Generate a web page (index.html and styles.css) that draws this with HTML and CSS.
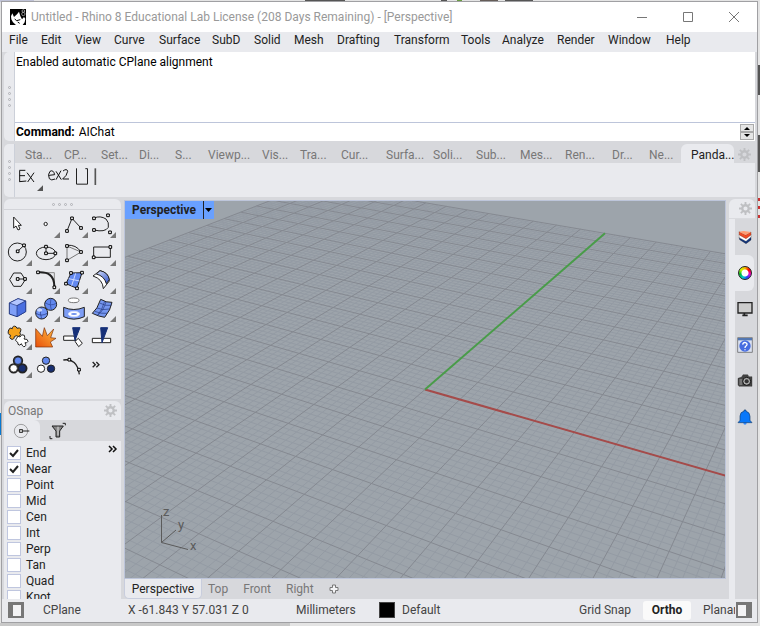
FILE: index.html
```html
<!DOCTYPE html>
<html lang="en">
<head>
<meta charset="utf-8">
<title>Untitled - Rhino 8</title>
<link rel="stylesheet" href="styles.css">
</head>
<body>
<div class="window">
  <header class="titlebar">
    <svg class="logo" viewBox="0 0 48 48"><rect width="48" height="48" fill="#000"/><path d="M3 22L7 13L12 24L21 16L27 8L31 21L36 31L42 24L46 29L44 40L38 48H18L9 40L4 31Z" fill="#fff"/><path d="M14 30L20 35L31 32M23 39L29 43" stroke="#000" stroke-width="3" fill="none"/><circle cx="40" cy="6" r="4" fill="none" stroke="#ccc" stroke-width="2"/><circle cx="40" cy="15" r="5" fill="none" stroke="#ccc" stroke-width="2"/></svg>
    <h1>Untitled - Rhino 8 Educational Lab License (208 Days Remaining) - [Perspective]</h1>
    <div class="winbtns">
      <button aria-label="Minimize"><svg viewBox="0 0 12 12"><path d="M1 6.500H11"/></svg></button>
      <button aria-label="Maximize"><svg viewBox="0 0 12 12"><path d="M1.500 1.500H10.500V10.500H1.500Z"/></svg></button>
      <button aria-label="Close"><svg viewBox="0 0 12 12"><path d="M1 1L11 11M11 1L1 11"/></svg></button>
    </div>
  </header>
  <nav class="menu">
    <button>File</button><button>Edit</button><button>View</button><button>Curve</button><button>Surface</button><button>SubD</button><button>Solid</button><button>Mesh</button><button>Drafting</button><button>Transform</button><button>Tools</button><button>Analyze</button><button>Render</button><button>Window</button><button>Help</button>
  </nav>
  <div class="body">
    <section class="command">
      <div class="grip"><i></i><i></i><i></i><i></i></div>
      <div class="console">
        <div class="history">Enabled automatic CPlane alignment</div>
        <div class="prompt">
          <label for="cmd">Command:</label><input id="cmd" type="text" value="AIChat">
          <div class="spin"><button aria-label="Previous"><svg viewBox="0 0 12 6"><path d="M3 5L6 2L9 5Z"/></svg></button><button aria-label="Next"><svg viewBox="0 0 12 6"><path d="M3 1L6 4L9 1Z"/></svg></button></div>
        </div>
      </div>
    </section>
    <section class="toolbar">
      <div class="grip"><i></i><i></i><i></i><i></i></div>
      <div class="toolbar-main">
        <div class="tabs">
          <button>Sta...</button><button>CP...</button><button>Set...</button><button>Di...</button><button>S...</button><button>Viewp...</button><button>Vis...</button><button>Tra...</button><button>Cur...</button><button>Surfa...</button><button>Soli...</button><button>Sub...</button><button>Mes...</button><button>Ren...</button><button>Dr...</button><button>Ne...</button><button class="on">Panda...</button>
          <button class="gear" aria-label="Options"><svg viewBox="0 0 14 14"><use href="#gear"/></svg></button>
        </div>
        <div class="custom">
          <button aria-label="Ex"><svg viewBox="48 489 84 90"><path d="M59 512V545M58 511H76M59 527H75M58 545L79 543M81 518L102 546M102 518L83 546" stroke="#111"/><path d="M129 556V573H111Z" fill="#555" stroke="none"/></svg></button>
          <button aria-label="Ex2"><svg viewBox="132 489 84 90"><path d="M147 526L164 524Q160 508 150 514Q142 523 148 536Q154 543 165 537M168 514L184 539M183 512L168 539M189 513Q201 504 203 514Q201 527 188 537H207" stroke="#111"/></svg></button>
          <button class="narrow" aria-label="Box"><svg viewBox="216 489 54 90"><path d="M229.500 505V552.500H262.500V506H256" stroke="#222"/></svg></button>
          <button class="narrow" aria-label="Line"><svg viewBox="270 489 54 90"><path d="M286 505V555" stroke="#555" stroke-width="5"/></svg></button>
        </div>
      </div>
    </section>
    <main class="work">
      <aside class="left">
        <section class="palette">
          <div class="hgrip"><i></i><i></i><i></i><i></i></div>
          <div class="tools" id="tools">
            <button aria-label="Select"><svg viewBox="12 45 84 84"><path d="M41 66V99L48 93L54 105L60 102L55 91H64Z" class="w"/></svg></button>
            <button aria-label="Point" class="more"><svg viewBox="96 45 84 84"><circle cx="137" cy="87" r="5" class="w"/></svg></button>
            <button aria-label="Polyline" class="more"><svg viewBox="180 45 84 84"><path d="M201 108L216 70L243 99"/><path class="n" d="M197 104h8v8h-8zM212 66h8v8h-8zM239 95h8v8h-8z"/></svg></button>
            <button aria-label="Curve" class="more"><svg viewBox="264 45 84 84"><path d="M282 69Q301 61 318 72Q328 82 325 97Q315 113 282 105"/><path class="n" d="M278 66h8v8h-8zM320 57h8v8h-8zM278 101h8v8h-8zM326 108h8v8h-8z"/></svg></button>
            <button aria-label="Circle" class="more"><svg viewBox="12 129 84 84"><circle cx="52" cy="171" r="27"/><path d="M53 169L72 151"/><path class="n" d="M49 165h8v8h-8zM68 147h8v8h-8z"/></svg></button>
            <button aria-label="Ellipse" class="more"><svg viewBox="96 129 84 84"><ellipse cx="138" cy="175" rx="29" ry="19"/><path d="M138 155V175H166"/><path class="n" d="M134 151h8v8h-8zM134 171h8v8h-8zM162 171h8v8h-8z"/></svg></button>
            <button aria-label="Arc" class="more"><svg viewBox="180 129 84 84"><path d="M201 196V153L243 171Z" stroke="#777"/><path d="M201 151Q228 148 243 171"/><path class="n" d="M197 149h8v8h-8zM197 192h8v8h-8zM239 167h8v8h-8z"/></svg></button>
            <button aria-label="Rectangle" class="more"><svg viewBox="264 129 84 84"><path d="M281 156H331V187H281Z"/><path class="n" d="M327 152h8v8h-8zM277 183h8v8h-8z"/></svg></button>
            <button aria-label="Polygon" class="more"><svg viewBox="12 213 84 84"><path d="M29 254L41 234H63L76 254L63 274H41Z"/><path d="M52 252H75"/><path class="n" d="M49 248h8v8h-8zM71 248h8v8h-8z"/></svg></button>
            <button aria-label="Fillet" class="more"><svg viewBox="96 213 84 84"><path d="M114 233H163V277" stroke="#888"/><path d="M117 232C143 231 162 240 163 273" stroke-width="6"/><path class="n" d="M110 228h8v8h-8zM159 273h8v8h-8z"/></svg></button>
            <button aria-label="Surface from points" class="more"><svg viewBox="180 213 84 84"><path d="M213 234L246 233L231 280L198 266Z" fill="#6389ef"/><path d="M227 235L215 272M206 251L239 258" stroke="#cdd9ff"/><path class="n" d="M209 230h8v8h-8zM242 229h8v8h-8zM194 262h8v8h-8zM227 276h8v8h-8z"/></svg></button>
            <button aria-label="Extrude" class="more"><svg viewBox="264 213 84 84"><defs><linearGradient id="sheet" x1="0" y1="0" x2="1" y2="1"><stop offset="0" stop-color="#dbe4ff"/><stop offset="1" stop-color="#2c4fc4"/></linearGradient></defs><path d="M279 243L300 227Q325 232 328 258L310 281Q308 252 279 243Z" fill="#fff"/><path d="M289 237L300 227Q325 232 328 254L319 266Q313 243 289 237Z" fill="url(#sheet)"/></svg></button>
            <button aria-label="Box" class="more"><svg viewBox="12 12 84 84"><path d="M28 39L54 26L77 33V65L51 80L28 72Z" fill="#7f9ff7" stroke="#22377f"/><path d="M28 39L54 26L77 33L51 47Z" fill="#b3c6ff" stroke="#22377f" stroke-width="2"/><path d="M51 47L77 33V65L51 80Z" fill="#4a6fe0" stroke="#22377f" stroke-width="2"/></svg></button>
            <button aria-label="Sphere" class="more"><svg viewBox="96 12 84 84"><circle cx="152" cy="43" r="18" fill="#6288ee"/><path d="M136 38Q151 50 169 40M153 25Q148 44 154 60" stroke="#2a4292" stroke-width="2"/><circle cx="125" cy="69" r="18" fill="#7195f5"/><path d="M108 70Q125 81 143 69M124 51Q118 70 125 87" stroke="#22377f" stroke-width="2"/><ellipse cx="119" cy="60" rx="8" ry="5" fill="#c7d6ff" stroke="none"/></svg></button>
            <button aria-label="Cylinder" class="more"><svg viewBox="180 12 84 84"><ellipse cx="221" cy="31" rx="16" ry="7" fill="#fff" stroke="#777"/><path d="M191 52Q221 65 253 52V80Q221 95 191 80Z" fill="#7d9df5"/><ellipse cx="222" cy="72" rx="17" ry="8" fill="#fff" stroke="#d3ddff"/><ellipse cx="222" cy="72" rx="9" ry="3" fill="#6e90ed" stroke="none"/></svg></button>
            <button aria-label="Surface tools" class="more"><svg viewBox="264 12 84 84"><path d="M277 70Q292 58 302 28Q318 38 336 37Q332 60 314 82Q297 80 277 70Z" fill="#7596ef"/><path d="M291 54Q307 62 328 57M293 76Q312 60 318 35M292 76Q306 62 314 34M299 39Q316 49 334 46M284 64Q303 72 321 70" stroke="#24387d" stroke-width="2"/></svg></button>
            <button aria-label="Explode" class="more"><svg viewBox="12 96 84 84"><path d="M26 120Q30 110 37 116Q38 105 48 110Q51 118 54 114Q65 113 62 123Q57 129 62 134Q56 144 49 137L43 140Q42 151 33 147Q26 143 32 136Q21 133 26 120Z" fill="#f5a21b"/><path d="M50 145Q53 134 60 141Q64 130 73 136Q76 143 72 147Q84 146 84 154Q80 161 75 158Q81 170 71 170Q65 166 64 161Q60 169 54 163Q55 156 50 155Q43 151 50 145Z" class="w"/></svg></button>
            <button aria-label="Join"><svg viewBox="96 96 84 84"><defs><linearGradient id="fire" x1="0" y1="1" x2="1" y2="0"><stop offset="0" stop-color="#e8500c"/><stop offset="1" stop-color="#ffc040"/></linearGradient></defs><path d="M107 116L127 139L133 113L142 137L161 117L152 143L168 145L151 156L158 171H107Z" fill="url(#fire)" stroke="#7a2c08" stroke-width="2"/></svg></button>
            <button aria-label="Trim"><svg viewBox="180 96 84 84"><path d="M191 138H222L228 151H191ZM225 154L235 145L247 160L236 170Z" fill="#fff"/><path d="M218 113H240L225 151Z" fill="#163078" stroke="#163078"/></svg></button>
            <button aria-label="Split"><svg viewBox="264 96 84 84"><path d="M277 145H332V158H277Z" fill="#fff"/><path d="M302 113H323L306 158Z" fill="#163078" stroke="#163078"/></svg></button>
            <button aria-label="Group" class="more"><svg viewBox="12 180 84 84"><g stroke-width="7"><circle cx="54" cy="212" r="12"/><circle cx="41" cy="235" r="12"/><circle cx="67" cy="235" r="12"/></g><g stroke-width="2"><circle cx="54" cy="212" r="11" fill="#6288ee"/><circle cx="41" cy="235" r="11" fill="#fff"/><circle cx="67" cy="235" r="11" fill="#172e70"/></g></svg></button>
            <button aria-label="Ungroup"><svg viewBox="96 180 84 84"><circle cx="138" cy="212" r="11" fill="#6288ee"/><circle cx="123" cy="236" r="11" fill="#fff"/><circle cx="153" cy="236" r="11" fill="#172e70"/></svg></button>
            <button aria-label="Edit points"><svg viewBox="180 180 84 84"><path d="M190 210Q231 203 238 253" stroke-width="4"/><path class="n" d="M204 205h8v8h-8zM233 235h8v8h-8z"/></svg></button>
            <button aria-label="More tools"><svg viewBox="264 180 84 84"><path d="M278 216L286 224L278 232M289 216L297 224L289 232" stroke="#222" stroke-width="4"/></svg></button>
          </div>
        </section>
        <section class="osnap">
          <header><h2>OSnap</h2><button class="gear" aria-label="OSnap options"><svg viewBox="0 0 14 14"><use href="#gear"/></svg></button></header>
          <div class="osnap-tabs">
            <button class="on" aria-label="Object snaps"><svg viewBox="0 0 54 54"><circle cx="24" cy="27" r="20" fill="none" stroke="#777" stroke-width="2"/><path d="M27 27H49" stroke="#222" stroke-width="3"/><rect x="20" y="23" width="8" height="8" fill="#fff" stroke="#222" stroke-width="3"/></svg></button>
            <button aria-label="Filters"><svg viewBox="0 0 54 54"><path d="M9 12H43L32 27V45H21V27Z" fill="#888" stroke="#222" stroke-width="3"/><path d="M27 14V40" stroke="#ddd" stroke-width="3"/><path d="M41 4H49V10M3 42V50H10" fill="none" stroke="#222" stroke-width="3"/></svg></button>
          </div>
          <div class="snaps">
            <div class="snaplist">
              <label><input type="checkbox" checked>End</label>
              <label><input type="checkbox" checked>Near</label>
              <label><input type="checkbox">Point</label>
              <label><input type="checkbox">Mid</label>
              <label><input type="checkbox">Cen</label>
              <label><input type="checkbox">Int</label>
              <label><input type="checkbox">Perp</label>
              <label><input type="checkbox">Tan</label>
              <label><input type="checkbox">Quad</label>
              <label><input type="checkbox">Knot</label>
            </div>
            <button class="expand" aria-label="More snaps"><svg viewBox="0 0 10 8"><path d="M1 1L4 4L1 7M5 1L8 4L5 7" fill="none" stroke="#111" stroke-width="1.500"/></svg></button>
          </div>
        </section>
      </aside>
      <section class="center">
        <div class="viewport">
          <svg class="scene" viewBox="125 201 600 377" preserveAspectRatio="xMinYMin slice">
            <path id="minor" stroke="#949ba4"/>
            <path id="major" stroke="#858991"/>
            <path id="xaxis" stroke="#a54b4a"/>
            <path id="yaxis" stroke="#499c49"/>
            <g class="triad"><path d="M161.500 515V542.500L188 549.500M161.500 542.500L176 530"/><text x="163" y="516">z</text><text x="178" y="529">y</text><text x="190" y="550">x</text></g>
          </svg>
          <div class="viewtitle"><button>Perspective</button><button class="drop" aria-label="Viewport menu"><svg viewBox="0 0 10 10"><path d="M1 3H8L4.500 7Z"/></svg></button></div>
        </div>
        <div class="viewtabs">
          <button class="on">Perspective</button><button>Top</button><button>Front</button><button>Right</button><button aria-label="New viewport"><svg viewBox="0 0 10 10"><path d="M3.500 1H6.500V3.500H9V6.500H6.500V9H3.500V6.500H1V3.500H3.500Z" fill="#f3f3f5" stroke="#777"/></svg></button>
        </div>
      </section>
      <aside class="right">
        <header><button class="gear" aria-label="Panel options"><svg viewBox="0 0 14 14"><use href="#gear"/></svg></button></header>
        <div class="panels">
          <button aria-label="Layers"><svg viewBox="0 0 48 48"><path d="M6 24L26 36L42 22V33L27 44L8 32Z" fill="#10347d" stroke="#222"/><path d="M6 16L26 27L42 15V24L27 37L7 26Z" fill="#fff" stroke="#666"/><path d="M6 8L26 18L42 9V18L27 29L7 18Z" fill="#ef4b25" stroke="#5b2b18"/><path d="M6 8L20 6L42 9L26 18Z" fill="#ff9d73"/></svg></button>
          <button class="on" aria-label="Colors"><i class="wheel"></i></button>
          <button aria-label="Display"><svg viewBox="0 0 48 48"><path d="M3 5H45V36H3Z" fill="#ccc" stroke="#222" stroke-width="4"/><path d="M22 36V42M16 43H32" stroke="#222" stroke-width="5"/></svg></button>
          <button aria-label="Help"><svg viewBox="0 0 48 48"><path d="M2 2H46V46H2Z" fill="#dce2f1" stroke="#555" stroke-width="2"/><path d="M3 3H45V10H3Z" fill="#5377b2"/><circle cx="24" cy="27" r="17" fill="#476de0"/><path d="M17 23Q18 15 26 17Q34 21 27 27Q24 29 24 33M24 37V40" fill="none" stroke="#fff" stroke-width="4"/></svg></button>
          <button aria-label="Camera"><svg viewBox="0 0 48 48"><path d="M3 16L14 12L18 5H32L36 11H45V40H6L3 36Z" fill="#444" stroke="#222"/><path d="M7 18H16V36H7Z" fill="#777"/><circle cx="29" cy="25" r="12" fill="#aaa" stroke="#111" stroke-width="3"/><circle cx="29" cy="25" r="6" fill="#333"/></svg></button>
          <button aria-label="Notifications"><svg viewBox="0 0 48 48"><circle cx="24" cy="42" r="5" fill="#348cff"/><path d="M3 41L9 34V21Q10 8 21 7V3H27V7Q38 9 39 22V34L45 41Z" fill="#0878fa" stroke="#19416f" stroke-width="2"/></svg></button>
        </div>
      </aside>
    </main>
  </div>
  <footer class="status">
    <button class="side" aria-label="Left sidebar"><i></i></button>
    <span class="plane">CPlane</span>
    <span class="coords">X -61.843 Y 57.031 Z 0</span>
    <span class="units">Millimeters</span>
    <span class="layer"><i></i>Default</span>
    <button class="snapbtn">Grid Snap</button>
    <button class="snapbtn on">Ortho</button>
    <button class="snapbtn planar">Planar</button>
    <button class="side end" aria-label="Right sidebar"><i></i></button>
  </footer>
</div>
<svg class="defs" aria-hidden="true"><defs><g id="gear"><circle cx="7" cy="7" r="3.500" fill="none" stroke="currentColor" stroke-width="2.500"/><path d="M7 0V3M7 11V14M0 7H3M11 7H14M2 2L4.200 4.200M9.800 9.800L12 12M12 2L9.800 4.200M4.200 9.800L2 12" stroke="currentColor" stroke-width="2" fill="none"/></g></defs></svg>
<script src="grid.js"></script>
</body>
</html>
```
FILE: grid.js
```js
// Perspective projection of the construction plane, in major grid units.
function project(u, v) {
  const w = 1 - 0.0213 * u + 0.03756 * v;
  return [
    ((425 + 25.1 * u + 35.58 * v) / w).toFixed(2),
    ((389.5 + 1.49 * u - 2.39 * v) / w).toFixed(2)
  ].join(" ");
}
function segment(u1, v1, u2, v2) {
  return "M" + project(u1, v1) + "L" + project(u2, v2);
}
const extent = 14;
const minor = [];
const major = [];
for (let i = -extent * 5; i <= extent * 5; i++) {
  const k = i / 5;
  const list = i % 5 === 0 ? major : minor;
  list.push(segment(k, -extent, k, extent), segment(-extent, k, extent, k));
}
document.getElementById("minor").setAttribute("d", minor.join(""));
document.getElementById("major").setAttribute("d", major.join(""));
document.getElementById("xaxis").setAttribute("d", segment(0, 0, extent, 0));
document.getElementById("yaxis").setAttribute("d", segment(0, 0, 0, extent));
```
FILE: styles.css
```css
* { box-sizing: border-box; }
:root { --bar: #d7d8dc; --panel: #e9eaee; --line: #bdc5da; --muted: #777; --ink: #222; }
html { height: 100%; }
body {
  margin: 0; height: 100%; padding: 1px 2px 3px 1px; overflow: hidden;
  font: 12px/16px Roboto, "Open Sans", sans-serif; color: var(--ink);
  background:
    linear-gradient(#555, #555) 305px 0 / 40px 2px no-repeat,
    linear-gradient(#555, #555) 441px 0 / 6px 2px no-repeat,
    linear-gradient(#6a9c42, #6a9c42) 457px 0 / 5px 2px no-repeat,
    linear-gradient(#655d58, #655d58) 480px 0 / 18px 2px no-repeat,
    linear-gradient(#555, #555) 505px 0 / 28px 2px no-repeat,
    linear-gradient(#0878d0, #0878d0) 0 413px / 2px 22px no-repeat,
    linear-gradient(#bfc2d6, #bfc2d6) 0 0 / 34px 2px no-repeat,
    linear-gradient(#c8c8c8, #c8c8c8) 0 623px / 290px 3px no-repeat,
    linear-gradient(#e4e4e4 0 65px, #555 65px 95px, #e4e4e4 95px 135px, #555 135px 172px, #e4e4e4 172px 198px, #c33 198px 201px, #e4e4e4 201px 206px, #c33 206px 209px, #e4e4e4 209px 215px, #c33 215px 218px, #e4e4e4 218px) right 0 top 0 / 2px 100% no-repeat,
    #e4e4e4;
}
button, input { font: inherit; color: inherit; border: 0; padding: 0; margin: 0; background: none; border-radius: 0; }
button { display: flex; align-items: center; white-space: nowrap; }
h1, h2 { font: inherit; margin: 0; }
svg { display: block; }
.defs { position: absolute; width: 0; height: 0; }
.window { height: 100%; border: 1px solid #a0a0a3; display: flex; flex-direction: column; background: var(--panel); }
.titlebar { height: 30px; flex: none; background: #fff; display: flex; align-items: center; padding-left: 8px; gap: 5px; color: #999; white-space: nowrap; }
.logo { width: 16px; height: 16px; }
.titlebar h1 { flex: 1; }
.winbtns { display: flex; }
.winbtns button { width: 46px; height: 30px; justify-content: center; }
.winbtns svg { width: 12px; height: 12px; fill: none; stroke: #777; }
.menu { height: 20px; flex: none; padding: 0 0 4px 7px; display: grid; grid-template-columns: 32px 34px 39px 45px 53px 42px 40px 43px 57px 67px 41px 55px 51px 58px 1fr; }
.body { flex: 1; min-height: 0; display: flex; flex-direction: column; padding: 0 2px; background: var(--bar); }
.command { height: 89px; flex: none; display: flex; }
.grip { width: 11px; flex: none; display: flex; flex-direction: column; align-items: center; justify-content: center; gap: 3px; background: var(--panel); border-right: 1px solid #ccd0d9; border-radius: 5px 0 0 5px; }
.grip i, .hgrip i { width: 3px; height: 3px; border: 1px solid #b0b1b6; border-radius: 50%; }
.console { flex: 1; display: flex; flex-direction: column; background: #fff; color: #000; }
.history { flex: 1; padding: 2px 1px; border-bottom: 1px solid var(--line); }
.prompt { height: 18px; display: flex; align-items: center; padding: 0 1px; gap: 4px; }
.prompt label { font-weight: 700; }
.prompt input { flex: 1; min-width: 0; outline: 0; height: 16px; }
.spin { width: 14px; }
.spin button { width: 14px; height: 8px; background: #e5e5e5; border: 1px solid #aaa; }
.spin svg { width: 12px; height: 6px; }
.toolbar { height: 53px; flex: none; margin: 3px 0 2px; display: flex; }
.toolbar-main { flex: 1; min-width: 0; background: var(--panel); }
.tabs { height: 19px; background: var(--bar); padding-left: 10px; display: grid; grid-template-columns: 39px 37px 38px 36px 33px 54px 38px 41px 45px 47px 43px 44px 45px 47px 37px 32px 53px 1fr; color: var(--muted); }
.tabs button { padding-top: 2px; }
.tabs .on { background: var(--panel); color: var(--ink); padding-left: 10px; border-radius: 6px 6px 0 0; }
.gear { color: #bfc0c3; }
.gear svg { width: 13px; height: 13px; }
.tabs .gear { justify-content: center; }
.custom { display: flex; padding-left: 1px; }
.custom button { width: 28px; height: 30px; }
.custom .narrow { width: 18px; }
.custom svg { width: 100%; height: 30px; fill: none; stroke-width: 3; }
.work { flex: 1; min-height: 0; display: flex; }
.left { width: 117px; flex: none; display: flex; flex-direction: column; gap: 2px; }
.palette { height: 200px; flex: none; background: var(--panel); border-radius: 6px 6px 0 0; }
.hgrip { height: 11px; display: flex; justify-content: center; align-items: center; gap: 3px; border-bottom: 1px solid #d3d4d9; }
.tools { display: grid; grid-template-columns: repeat(4, 28px); grid-auto-rows: 28px; }
.tools button { position: relative; }
.tools svg { width: 28px; height: 28px; fill: none; stroke: #222; stroke-width: 3; }
.tools .w, .tools .n { fill: #fff; }
.tools .n { stroke: #000; }
.more::after { content: ""; position: absolute; right: 0; bottom: 0; border: 3px solid transparent; border-right-color: #777; border-bottom-color: #777; }
.osnap { flex: 1; min-height: 0; display: flex; flex-direction: column; background: var(--panel); border-radius: 6px 6px 0 0; }
.osnap header { height: 19px; flex: none; display: flex; align-items: center; justify-content: space-between; padding: 0 4px; color: var(--muted); }
.osnap-tabs { height: 21px; flex: none; display: flex; background: var(--bar); }
.osnap-tabs button { width: 36px; justify-content: center; }
.osnap-tabs .on { background: var(--panel); border-radius: 0 6px 0 0; }
.osnap-tabs svg { width: 18px; height: 18px; }
.snaps { flex: 1; min-height: 0; overflow: hidden; display: flex; justify-content: space-between; align-items: flex-start; padding: 4px 3px 0; }
.snaplist label { display: flex; align-items: center; height: 16px; gap: 5px; }
.snaplist input { appearance: none; width: 14px; height: 14px; background: #fff; border: 1px solid #bfc6df; }
.snaplist input:checked { background: #fff url("data:image/svg+xml,%3Csvg xmlns='http://www.w3.org/2000/svg' viewBox='0 0 12 12'%3E%3Cpath d='M2 6L5 9L10 3' fill='none' stroke='%23222' stroke-width='2'/%3E%3C/svg%3E"); }
.expand svg { width: 10px; height: 8px; }
.center { flex: 1; min-width: 0; margin: 1px 3px 0; display: flex; flex-direction: column; }
.viewport { flex: 1; min-height: 0; position: relative; background: #9da4ab; border: 1px solid var(--line); overflow: hidden; }
.scene { width: 100%; height: 100%; fill: none; stroke-width: 1; }
#xaxis, #yaxis { stroke-width: 2; }
.triad path { stroke: #5b5b5b; }
.triad text { fill: #5b5b5b; font-size: 13px; }
.viewtitle { position: absolute; left: 0; top: 0; height: 18px; display: flex; background: #69a0ff; font-weight: 700; }
.viewtitle button { padding: 0 7px; }
.viewtitle .drop { width: 11px; padding: 0; border-left: 1px solid #222; }
.drop svg { width: 10px; height: 10px; }
.viewtabs { height: 20px; flex: none; display: flex; color: var(--muted); gap: 15px; }
.viewtabs .on { background: var(--panel); color: var(--ink); width: 78px; justify-content: center; border: 1px solid #c8cddd; border-top: 0; border-radius: 0 0 5px 5px; margin-right: -9px; }
.viewtabs svg { width: 10px; height: 10px; }
.right { width: 26px; flex: none; display: flex; flex-direction: column; background: var(--panel); border-radius: 6px 6px 0 0; }
.right header { height: 20px; flex: none; display: flex; justify-content: center; padding-left: 6px; border-bottom: 1px solid #dadbdf; }
.panels { flex: 1; margin-left: 6px; background: var(--bar); }
.panels button { width: 19px; height: 36px; justify-content: center; }
.panels svg { width: 16px; height: 16px; }
.panels .on { background: var(--panel); border-radius: 0 6px 6px 0; }
.wheel { width: 14px; height: 14px; border-radius: 50%; background: radial-gradient(circle, #fff 0 3px, transparent 4px), conic-gradient(#f7b500, #f00, #e0c, #24f, #0cc, #0b3, #cf0, #f7b500); border: 1px solid #222; }
.status { height: 23px; flex: none; padding: 0 5px 1px 6px; display: flex; align-items: center; color: #444; white-space: nowrap; }
.side { width: 16px; height: 16px; flex: none; background: #777; padding: 2px; }
.side i { width: 8px; height: 11px; background: #f3f3f5; margin-left: 3px; }
.side.end i { margin: 0; }
.plane { width: 85px; margin-left: 19px; }
.coords { width: 168px; }
.units { width: 83px; }
.layer { display: flex; gap: 7px; flex: 1; }
.layer i { width: 16px; height: 16px; background: #000; border: 1px solid #444; }
.snapbtn { height: 19px; margin-right: 12px; }
.snapbtn.on { width: 48px; justify-content: center; background: #fafafa; color: var(--ink); font-weight: 700; border-radius: 3px; }
.snapbtn.planar { width: 32px; margin-right: 1px; overflow: hidden; }
```
